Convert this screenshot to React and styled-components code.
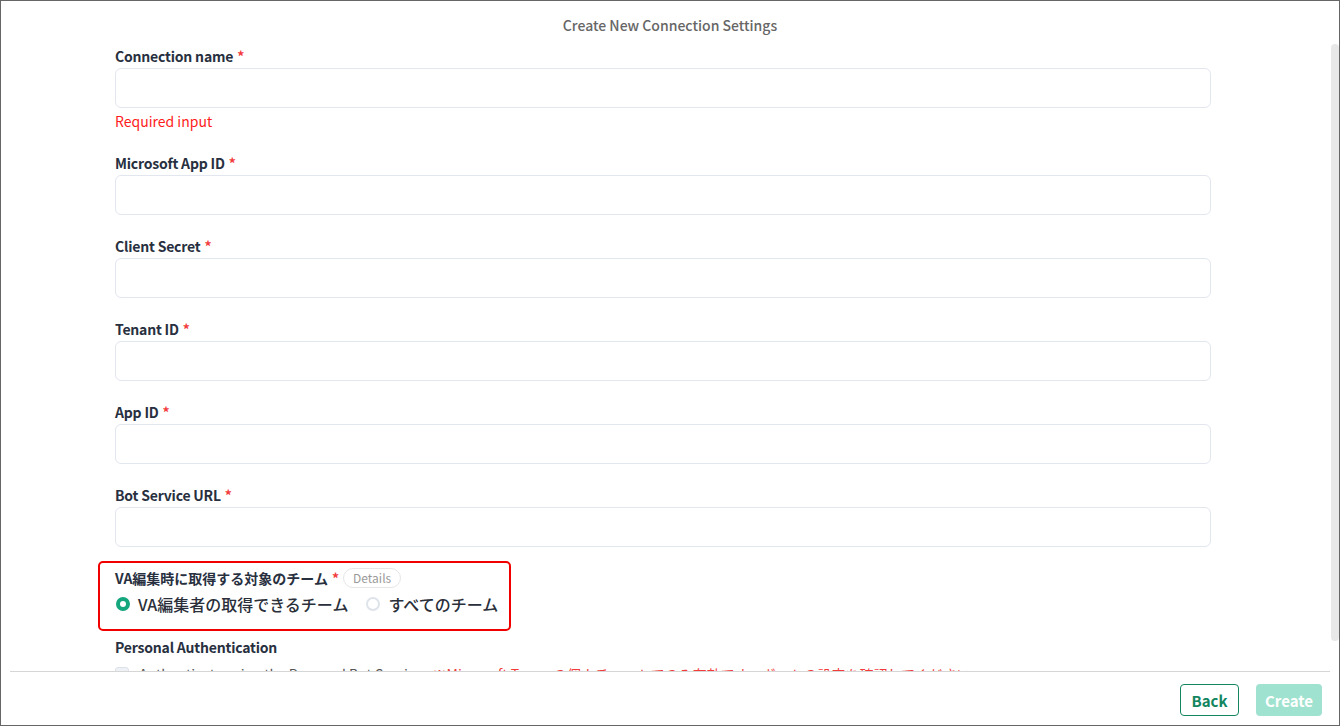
import React, { useState } from "react";
import styled, { createGlobalStyle } from "styled-components";

const GlobalStyle = createGlobalStyle`
  html, body {
    margin: 0;
    padding: 0;
    background: #fff;
  }
  * {
    box-sizing: border-box;
  }
  body {
    font-family: "Noto Sans CJK JP", "Noto Sans", sans-serif;
  }
`;

const fields = [
  { key: "name", label: "Connection name", error: "Required input" },
  { key: "appId", label: "Microsoft App ID" },
  { key: "secret", label: "Client Secret" },
  { key: "tenant", label: "Tenant ID" },
  { key: "vaAppId", label: "App ID" },
  { key: "botUrl", label: "Bot Service URL" },
];

const App = () => {
  const [values, setValues] = useState({});
  const [team, setTeam] = useState("editor");
  const [personal, setPersonal] = useState(false);

  const onChange = (key) => (e) => {
    const { value } = e.target;
    setValues((prev) => ({ ...prev, [key]: value }));
  };

  return (
    <Frame>
      <GlobalStyle />
      <Header>Create New Connection Settings</Header>
      <ScrollWrap>
        <ScrollArea>
          <Form>
            {fields.map((f) => (
              <Field key={f.key}>
                <Label>
                  {f.label}
                  <Required>*</Required>
                </Label>
                <TextInput value={values[f.key] || ""} onChange={onChange(f.key)} />
                {f.error && <ErrorText>{f.error}</ErrorText>}
              </Field>
            ))}

            <HighlightBox>
              <Label>
                VA編集時に取得する対象のチーム
                <Required>*</Required>
                <DetailsPill>Details</DetailsPill>
              </Label>
              <RadioRow>
                <RadioItem onClick={() => setTeam("editor")}>
                  <RadioDot $checked={team === "editor"} />
                  VA編集者の取得できるチーム
                </RadioItem>
                <RadioItem onClick={() => setTeam("all")}>
                  <RadioDot $checked={team === "all"} />
                  すべてのチーム
                </RadioItem>
              </RadioRow>
            </HighlightBox>

            <Label>Personal Authentication</Label>
            <CheckRow onClick={() => setPersonal(!personal)}>
              <CheckBox $checked={personal} />
              <CheckText>Authenticate using the Personal Bot Service</CheckText>
              <WarnText>※Microsoft Teamsの個人チャットでのみ有効です。ボットの設定を確認してください。</WarnText>
            </CheckRow>
          </Form>
        </ScrollArea>
        {/* scrollbar thumb, headless browser hides native bars */}
        <ScrollThumb />
      </ScrollWrap>
      <Footer>
        <OutlineButton>Back</OutlineButton>
        <PrimaryButton disabled>Create</PrimaryButton>
      </Footer>
    </Frame>
  );
};

export default App;

const Frame = styled.div`
  width: 1340px;
  height: 726px;
  border: 1px solid #666;
  display: flex;
  flex-direction: column;
  background: #fff;
  overflow: hidden;
`;

const Header = styled.div`
  height: 44px;
  flex-shrink: 0;
  padding-top: 14px;
  text-align: center;
  font-size: 14px;
  line-height: 20px;
  font-weight: 500;
  color: #666;
`;

const ScrollWrap = styled.div`
  position: relative;
  flex: 1;
  min-height: 0;
  display: flex;
`;

const ScrollArea = styled.div`
  flex: 1;
  overflow-y: auto;
  overflow-x: hidden;
  scrollbar-width: none;

  &::-webkit-scrollbar {
    display: none;
  }
`;

const ScrollThumb = styled.div`
  position: absolute;
  top: -1px;
  right: 0;
  width: 8px;
  height: 597px;
  background: #e8e8e8;
  border-radius: 4px;
`;

const Form = styled.div`
  width: 1210px;
  padding: 0 0 15px 114px;
  display: flex;
  flex-direction: column;
  align-items: flex-start;
`;

const Field = styled.div`
  width: 1096px;
  display: flex;
  flex-direction: column;
  margin-bottom: 20px;
`;

const Label = styled.div`
  display: flex;
  align-items: center;
  font-size: 14px;
  line-height: 22px;
  font-weight: 700;
  letter-spacing: -0.2px;
  color: #283040;
  margin-bottom: 1px;
`;

const Required = styled.span`
  color: #f23c3c;
  margin-left: 4px;
  font-weight: 700;
`;

const TextInput = styled.input`
  width: 100%;
  height: 40px;
  border: 1px solid #e2e6ee;
  border-radius: 6px;
  padding: 0 12px;
  font-size: 14px;
  font-family: inherit;
  outline: none;
  background: #fff;
`;

const ErrorText = styled.div`
  margin-top: 2px;
  font-size: 14px;
  line-height: 22px;
  color: #ff1c1c;
`;

const HighlightBox = styled.div`
  margin: -6px 0 5px -17px;
  padding: 4px 11px 13px 15px;
  border: 2px solid #f00000;
  border-radius: 5px;

  ${Label} {
    margin-bottom: 3px;
    letter-spacing: 0;
  }
`;

const DetailsPill = styled.span`
  margin-left: 4px;
  height: 20px;
  padding: 0 9px;
  border: 1px solid #e6e6e6;
  border-radius: 10px;
  font-size: 12px;
  line-height: 18px;
  font-weight: 400;
  color: #9a9a9a;
`;

const RadioRow = styled.div`
  display: flex;
  align-items: center;
  gap: 17px;
`;

const RadioItem = styled.label`
  display: flex;
  align-items: center;
  gap: 8px;
  padding-left: 1px;
  font-size: 16px;
  line-height: 24px;
  font-weight: 500;
  color: #2a2f3a;
  cursor: pointer;
`;

const RadioDot = styled.span`
  width: 14px;
  height: 14px;
  border-radius: 50%;
  background: #fff;
  border: ${(p) => (p.$checked ? "4px solid #14a67c" : "2px solid #dfe3ea")};
`;

const CheckRow = styled.div`
  margin-top: 4px;
  display: flex;
  align-items: center;
  gap: 10px;
  font-size: 14px;
  line-height: 22px;
  cursor: pointer;
`;

const CheckBox = styled.span`
  width: 14px;
  height: 14px;
  border-radius: 3px;
  border: 1px solid #dde2ea;
  background: ${(p) => (p.$checked ? "#14a67c" : "#eef1f5")};
`;

const CheckText = styled.span`
  color: #555;
`;

const WarnText = styled.span`
  color: #f23c3c;
`;

const Footer = styled.div`
  flex-shrink: 0;
  margin: 0 9px;
  padding: 12px 8px 9px;
  border-top: 1px solid #d6d6d6;
  display: flex;
  justify-content: flex-end;
  gap: 17px;
`;

const BaseButton = styled.button`
  height: 32px;
  border-radius: 4px;
  font-family: inherit;
  font-size: 15px;
  font-weight: 700;
  cursor: pointer;
`;

const OutlineButton = styled(BaseButton)`
  width: 59px;
  background: #fff;
  border: 1px solid #13855f;
  color: #13855f;
`;

const PrimaryButton = styled(BaseButton)`
  width: 66px;
  background: #9fe2cf;
  border: none;
  color: #fff;

  &:disabled {
    cursor: default;
  }
`;
